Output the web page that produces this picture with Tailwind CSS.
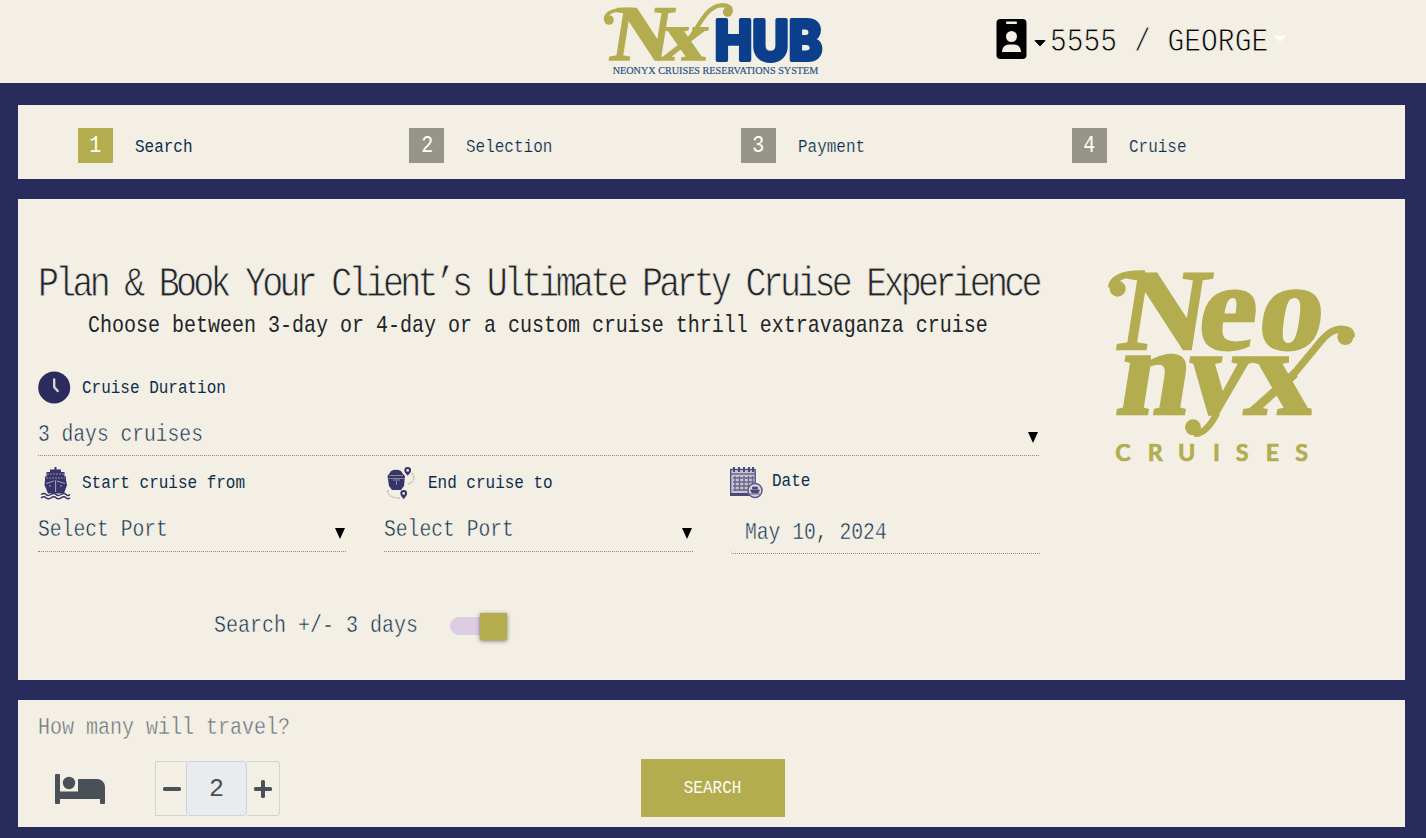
<!DOCTYPE html>
<html lang="en">
<head>
  <meta charset="UTF-8" />
  <meta name="viewport" content="width=device-width, initial-scale=1.0" />
  <title>NxHub - Neonyx Cruises Reservations System</title>
  <script src="https://cdn.jsdelivr.net/npm/@tailwindcss/browser@4"></script>
</head>
<body class="bg-[#282b5c] h-[838px] overflow-hidden whitespace-nowrap font-['Liberation_Mono',monospace] text-[#0c2e4e]">

  <!-- Header -->
  <header class="h-[83px] bg-[#f3efe4] flex pl-[590px]">
    <svg class="w-[250px] h-[83px] shrink-0" viewBox="0 0 750 249">
      <g fill="#b3ad50" stroke="#b3ad50" stroke-width="5" font-family="Liberation Serif" font-weight="bold" font-size="240">
        <text transform="translate(54 181) skewX(-9) scale(1.040 .980)">N</text>
        <text transform="translate(206 181) skewX(-9) scale(1.160 .880)">x</text>
        <circle cx="57" cy="60" r="12" />
        <circle cx="413" cy="36" r="12" />
      </g>
      <g fill="none" stroke="#b3ad50" stroke-linecap="round">
        <path d="M47 58C46 38 70 26 125 28" stroke-width="11" />
        <path d="M290 125C325 88 345 20 392 16C414 14 423 22 422 34" stroke-width="13" />
      </g>
      <text x="374" y="180" textLength="322" lengthAdjust="spacingAndGlyphs" font-family="Inter" font-weight="800" font-size="163" fill="#0b3f8c" stroke="#0b3f8c" stroke-width="12" stroke-linejoin="round">HUB</text>
      <text x="68" y="221" textLength="617" lengthAdjust="spacingAndGlyphs" font-family="Liberation Serif" font-size="32" fill="#2c5188" stroke="#2c5188" stroke-width=".6">NEONYX CRUISES RESERVATIONS SYSTEM</text>
    </svg>
    <div class="flex ml-[156px] text-black">
      <svg class="w-[31px] h-10 mt-[19px]" viewBox="0 0 31 40">
        <rect x=".5" width="30" height="40" rx="4" fill="#000" />
        <rect x="10" y="2.500" width="11" height="2.500" rx="1" fill="#f3efe4" />
        <circle cx="15.500" cy="17.500" r="5.500" fill="#f3efe4" />
        <path d="M6 33v-1a7 7 0 0 1 7-6.500h5a7 7 0 0 1 7 6.500v1z" fill="#f3efe4" />
      </svg>
      <svg class="w-3 h-[7px] mt-10 ml-[7px]" viewBox="0 0 12 7"><path d="M1 .5h10L6 6z" fill="#000" stroke="#000" stroke-linejoin="round" /></svg>
      <div class="w-[218px] ml-[4px] pt-[1px]">
        <span class="inline-block origin-left scale-x-[.833] text-[33.6px] leading-[82px] [-webkit-text-stroke:.9px_#f3efe4]">5555 / GEORGE</span>
      </div>
      <svg class="w-3 h-[7px] mt-9 ml-[6px]" viewBox="0 0 12 7"><path d="M0 0h12L6 6z" fill="#fffdf6" /></svg>
    </div>
  </header>

  <main class="pl-[18px] pr-[21px] pt-[22px] flex flex-col gap-5">

    <!-- Steps -->
    <section class="h-[74px] bg-[#f3efe4] pl-[60px] pr-[2px] pt-[23px] grid grid-cols-4">
      <div class="flex gap-[22px]">
        <div class="w-[35px] h-[35px] bg-[#b3ad50] text-[#fffdf4] text-2xl leading-[36px] text-center"><span class="inline-block scale-x-[.833]">1</span></div>
        <span class="inline-block h-[38px] origin-left scale-x-[.833] text-[19.2px] leading-[38px]">Search</span>
      </div>
      <div class="flex gap-[22px]">
        <div class="w-[35px] h-[35px] bg-[#97948c] text-[#fffdf4] text-2xl leading-[36px] text-center"><span class="inline-block scale-x-[.833]">2</span></div>
        <span class="inline-block h-[38px] origin-left scale-x-[.833] text-[19.2px] leading-[38px] [-webkit-text-stroke:.2px_#f3efe4]">Selection</span>
      </div>
      <div class="flex gap-[22px]">
        <div class="w-[35px] h-[35px] bg-[#97948c] text-[#fffdf4] text-2xl leading-[36px] text-center"><span class="inline-block scale-x-[.833]">3</span></div>
        <span class="inline-block h-[38px] origin-left scale-x-[.833] text-[19.2px] leading-[38px] [-webkit-text-stroke:.2px_#f3efe4]">Payment</span>
      </div>
      <div class="flex gap-[22px]">
        <div class="w-[35px] h-[35px] bg-[#97948c] text-[#fffdf4] text-2xl leading-[36px] text-center"><span class="inline-block scale-x-[.833]">4</span></div>
        <span class="inline-block h-[38px] origin-left scale-x-[.833] text-[19.2px] leading-[38px] [-webkit-text-stroke:.2px_#f3efe4]">Cruise</span>
      </div>
    </section>

    <!-- Search form -->
    <section class="h-[481px] bg-[#f3efe4] pl-5 flex">
      <div class="w-[1002px] shrink-0 pt-[61px]">
        <h1 class="w-fit h-[50px] origin-left scale-x-[.833] text-[42px] leading-[50px] tracking-[-4.49px] text-[#212529] [-webkit-text-stroke:.8px_#f3efe4]">Plan &amp; Book Your Client’s Ultimate Party Cruise Experience</h1>
        <h2 class="w-fit h-7 mt-[2px] ml-[50px] origin-left scale-x-[.833] text-2xl leading-7 text-[#212529]">Choose between 3-day or 4-day or a custom cruise thrill extravaganza cruise</h2>

        <div class="flex h-[33px] mt-[31px]">
          <svg class="size-[33px]" viewBox="0 0 33 33">
            <circle cx="16.200" cy="16.500" r="16" fill="#2c2b5e" />
            <path d="M16.200 8.500v7.500l3.500 4" fill="none" stroke="#d8d4d2" stroke-width="2.400" stroke-linecap="round" />
          </svg>
          <label class="ml-[11px] origin-left scale-x-[.833] text-[19.2px] leading-[34px]">Cruise Duration</label>
        </div>
        <div class="h-[52px] pt-[11px] mr-[1px] flex justify-between border-b border-dotted border-[#8d8a82]">
          <span class="h-10 origin-left scale-x-[.818] text-2xl leading-10 [-webkit-text-stroke:.5px_#f3efe4]">3 days cruises</span>
          <svg class="w-[10px] h-[11px] mt-[17px] mr-[1px]" viewBox="0 0 10 11"><path d="M0 0h10L5 11z" /></svg>
        </div>

        <div class="grid grid-cols-[308px_309px_310px] gap-x-[38px] pt-[10px]">
          <div>
            <div class="flex h-[34px]">
              <svg class="w-[33px] h-[34px]" viewBox="0 0 33 34" fill="#37346b">
                <path d="M16.500 1h2v3h-2zM12 3.500h11V6H12zM8.500 6h18v4.500h-18zM7 10.500h21V14H7zM7 14h21l1 5-3 8.500H10L6.500 19z" />
                <path d="M9 8h17M8 12h19" stroke="#aaa6b2" stroke-width=".8" stroke-dasharray="2 1" />
                <path d="M17.600 14v12M8 17.500l8-2.500M27 17.500l-8-2.500M11 20h2M22 20h2" stroke="#aaa6b2" stroke-width="1" />
                <path d="M3 28.500q3-2 5 0t5 0t5 0t5 0t5 0t4 0M3 31.800q3-2 5 0t5 0t5 0t5 0t5 0t4 0" fill="none" stroke="#37346b" stroke-width="1.400" />
              </svg>
              <label class="ml-[11px] h-[34px] origin-left scale-x-[.833] text-[19.2px] leading-[34px]">Start cruise from</label>
            </div>
            <div class="h-[52px] pt-[10px] flex justify-between border-b border-dotted border-[#8d8a82]">
              <span class="h-10 origin-left scale-x-[.82] text-2xl leading-10 [-webkit-text-stroke:.5px_#f3efe4]">Select Port</span>
              <svg class="w-[10px] h-[11px] mt-[18px] mr-[1px]" viewBox="0 0 10 11"><path d="M0 0h10L5 11z" /></svg>
            </div>
          </div>
          <div>
            <div class="flex h-[34px]">
              <svg class="w-[33px] h-[34px]" viewBox="0 0 33 34" fill="#37346b">
                <path d="M7 5q5-2.500 10 0l2 3 2 2-1 10-3 4H8l-3-4-1.500-10L5 8z" />
                <path d="M5 9.500h14M4.500 12.500h16" stroke="#8b8799" stroke-width="1" />
                <path d="M12.500 15v4M9 14h7" stroke="#aaa6b2" stroke-width=".8" />
                <path d="M23.700 1a3.400 3.400 0 0 0-3.400 3.400c0 2 3.400 5.100 3.400 5.100s3.400-3.100 3.400-5.100A3.400 3.400 0 0 0 23.700 1zM19.700 24a3.400 3.400 0 0 0-3.400 3.400c0 2 3.400 5.600 3.400 5.600s3.400-3.600 3.400-5.600A3.400 3.400 0 0 0 19.700 24z" />
                <circle cx="23.700" cy="4.400" r="1.300" fill="#f3efe4" /><circle cx="19.700" cy="27.400" r="1.300" fill="#f3efe4" />
                <path d="M28 7c4 5 1 10-4 11M4 24c-1 6 5 8 12 8" fill="none" stroke="#bbb7ba" stroke-width="1.400" stroke-dasharray="2 1" />
              </svg>
              <label class="ml-[11px] h-[34px] origin-left scale-x-[.833] text-[19.2px] leading-[34px]">End cruise to</label>
            </div>
            <div class="h-[52px] pt-[10px] flex justify-between border-b border-dotted border-[#8d8a82]">
              <span class="h-10 origin-left scale-x-[.82] text-2xl leading-10 [-webkit-text-stroke:.5px_#f3efe4]">Select Port</span>
              <svg class="w-[10px] h-[11px] mt-[18px] mr-[1px]" viewBox="0 0 10 11"><path d="M0 0h10L5 11z" /></svg>
            </div>
          </div>
          <div class="-ml-px mr-px">
            <div class="flex h-[34px]">
              <svg class="w-[33px] h-[34px]" viewBox="0 0 33 34">
                <rect x=".7" y="3.500" width="24.500" height="25" fill="#c9c5cf" stroke="#4b487a" stroke-width="1.300" />
                <path d="M4 1v5M9 1v5M14 1v5M19 1v5M23 1v5" stroke="#4b487a" stroke-width="2" />
                <path d="M1 8h24M3 12h21M3 16h21M3 20h21M3 24h19M5 10v15M9.500 10v15M14 10v15M18.500 10v15M22.500 10v10" stroke="#68648d" stroke-width="1.300" />
                <path d="M0 27h20v3H0z" fill="#4b487a" />
                <circle cx="25" cy="24.500" r="7" fill="#dad6da" stroke="#5f5b89" stroke-width="1.500" />
                <path d="M20.500 24h9l-1.500 3h-6zM22.500 21h5v2h-5zM20 28h10" fill="#4b487a" stroke="#4b487a" stroke-width=".8" />
              </svg>
              <label class="ml-[9px] h-[30px] origin-left scale-x-[.833] text-[19.2px] leading-[30px]">Date</label>
            </div>
            <div class="h-[54px] pl-[15px] pt-[13px] border-b border-dotted border-[#8d8a82] rounded-bl">
              <span class="inline-block h-10 origin-left scale-x-[.82] text-2xl leading-10 [-webkit-text-stroke:.5px_#f3efe4]">May 10, 2024</span>
            </div>
          </div>
        </div>

        <div class="flex mt-[52px] pl-[176px]">
          <div class="w-[236px]"><span class="inline-block h-10 origin-left scale-x-[.833] text-2xl leading-10 [-webkit-text-stroke:.5px_#f3efe4]">Search +/- 3 days</span></div>
          <div class="w-[57px] h-[18px] mt-[11px] rounded-l-full bg-[#dccde2] flex items-center justify-end">
            <div class="size-[27px] shrink-0 bg-[#b3ad50] shadow-[0_1px_4px_rgba(0,0,0,.5)]"></div>
          </div>
        </div>
      </div>

      <svg class="w-[270px] h-[220px] mt-14 ml-[55px]" viewBox="0 0 810 660">
        <defs>
          <!-- room for the swashes: upper right serif of the x, tail of the y -->
          <clipPath id="xcut"><path d="M400 280H582V330L650 420V500H400z" /></clipPath>
          <clipPath id="ycut"><path d="M240 280H500V482H240z" /></clipPath>
        </defs>
        <g fill="#b3ad50" stroke="#b3ad50" stroke-width="6" font-family="Liberation Serif" font-weight="bold" font-size="300">
          <text transform="translate(60 282) skewX(-9) scale(1.210 1.150)">N</text>
          <text transform="translate(300 281) skewX(-8) scale(1.300 1.240)">e</text>
          <text transform="translate(480 281) skewX(-8) scale(1.300 1.240)">o</text>
          <text transform="translate(57 477) skewX(-9) scale(1.290 1.250)">n</text>
          <g clip-path="url(#ycut)"><text transform="translate(258 477) skewX(-9) scale(1.280 1.230)">y</text></g>
          <g clip-path="url(#xcut)"><text transform="translate(445 477) skewX(-9) scale(1.390 1.230)">x</text></g>
          <circle cx="68" cy="101" r="21" />
          <circle cx="751" cy="246" r="21" />
          <circle cx="294" cy="517" r="21" />
        </g>
        <g fill="none" stroke="#b3ad50">
          <path d="M48 98C52 72 78 54 150 56" stroke-width="20" />
          <path d="M565 395L670 268C705 222 730 220 750 224C766 227 770 236 768 246" stroke-width="22" />
          <path d="M366 474C345 515 322 538 298 536" stroke-width="20" />
        </g>
        <text x="61 158 249 354 422 512 601" y="619" font-family="Lato" font-weight="bold" font-size="70" fill="#b3ad50" stroke="#b3ad50" stroke-width="2">CRUISES</text>
      </svg>
    </section>

    <!-- Travellers -->
    <section class="h-[127px] bg-[#f3efe4] pl-5 pt-[8px]">
      <div class="h-10 w-fit origin-left scale-x-[.833] text-2xl leading-10 text-[#6c757d] [-webkit-text-stroke:.4px_#f3efe4]">How many will travel?</div>
      <div class="flex mt-[11px]">
        <svg class="w-[50px] h-[30px] mt-[15px] ml-[17px]" viewBox="0 0 50 30" fill="#495057">
          <path d="M0 1a1 1 0 0 1 1-1h3a1 1 0 0 1 1 1v16.500h18V6a1 1 0 0 1 1-1h18a8 8 0 0 1 8 8v16a1 1 0 0 1-1 1h-3a1 1 0 0 1-1-1v-4H5v4a1 1 0 0 1-1 1H1a1 1 0 0 1-1-1z" />
          <circle cx="14" cy="9" r="6.200" />
        </svg>
        <div class="flex h-[55px] w-[125px] ml-[50px] mt-[2px] text-[#495057]">
          <button class="w-8 border border-r-0 border-[#ced4da] flex items-center justify-center">
            <svg class="w-[18px] h-1" viewBox="0 0 18 4"><rect width="18" height="4" rx="1.500" fill="#495057" /></svg>
          </button>
          <div class="w-[61px] -ml-px bg-[#e9ecef] border border-[#ced4da] rounded text-center text-[25px] leading-[56px]">2</div>
          <button class="w-[33px] border border-l-0 border-[#ced4da] rounded-r flex items-center justify-center">
            <svg class="size-[18px]" viewBox="0 0 18 18" fill="#495057"><rect y="7" width="18" height="4" rx="1.500" /><rect x="7" width="4" height="18" rx="1.500" /></svg>
          </button>
        </div>
        <button class="w-[144px] h-[58px] ml-[361px] bg-[#b3ad50] text-[#fffdf4] text-[19.2px]"><span class="inline-block scale-x-[.833]">SEARCH</span></button>
      </div>
    </section>
  </main>
</body>
</html>
